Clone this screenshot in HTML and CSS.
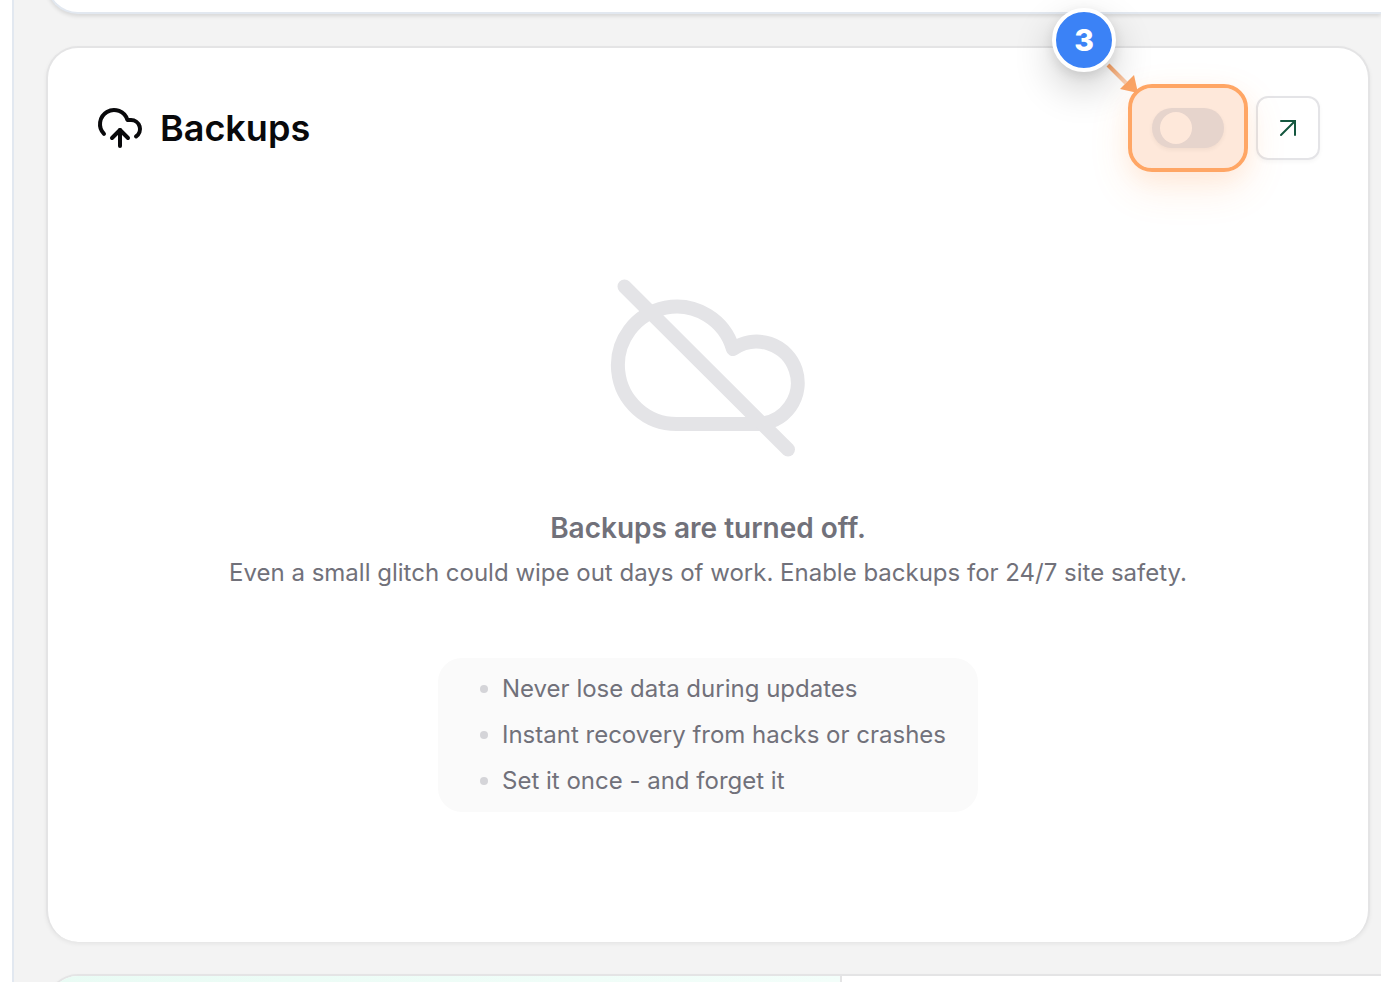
FILE: index.html
```html
<!DOCTYPE html>
<html lang="en">
<head>
<meta charset="utf-8">
<title>Backups</title>
<link rel="stylesheet" href="styles.css">
</head>
<body>
<div class="layout">
  <aside class="sidebar" aria-label="Sidebar"></aside>
  <main class="content">
    <section class="card card-previous" aria-label="Previous section"></section>

    <section class="card card-backups" aria-labelledby="backups-title">
      <header class="card-header">
        <svg class="title-icon" viewBox="0 0 24 24" aria-hidden="true">
          <path d="M12 13v8"/>
          <path d="M4 14.899A7 7 0 1 1 15.71 8h1.79a4.5 4.5 0 0 1 2.5 8.242"/>
          <path d="m8 17 4-4 4 4"/>
        </svg>
        <h2 class="title" id="backups-title">Backups</h2>
        <div class="actions">
          <div class="switch-wrap">
            <input class="switch" type="checkbox" role="switch" aria-label="Enable backups">
            <span class="highlight"></span>
            <svg class="pointer" viewBox="0 0 36 32" aria-hidden="true">
              <defs>
                <linearGradient id="fade" gradientUnits="userSpaceOnUse" x1="4" y1="4" x2="24" y2="24">
                  <stop offset="0" stop-color="#f9a264"/>
                  <stop offset="1" stop-color="#fbd5bb"/>
                </linearGradient>
              </defs>
              <path d="M4 4 22 22" stroke="url(#fade)" stroke-width="4"/>
              <path d="M16 28 30 14 34 32Z" fill="#fca566"/>
            </svg>
            <span class="step">3</span>
          </div>
          <button class="open" type="button" aria-label="Open backups">
            <svg class="open-icon" viewBox="0 0 24 24" aria-hidden="true">
              <path d="M5 19 19 5M5 5h14v14"/>
            </svg>
          </button>
        </div>
      </header>

      <div class="empty">
        <svg class="empty-icon" viewBox="0 0 200 184" aria-hidden="true">
          <path d="M69 148A58.700 58.700 0 1 1 125 73A41.200 41.200 0 1 1 149.500 148Z"/>
          <path d="M16.500 10.500 180 173.500"/>
        </svg>
        <h3 class="empty-title">Backups are turned off.</h3>
        <p class="empty-text">Even a small glitch could wipe out days of work. Enable backups for 24/7 site safety.</p>
        <ul class="benefits">
          <li>Never lose data during updates</li>
          <li>Instant recovery from hacks or crashes</li>
          <li>Set it once - and forget it</li>
        </ul>
      </div>
    </section>

    <section class="card card-next" aria-label="Next section">
      <div class="next-accent"></div>
    </section>
  </main>
</div>
</body>
</html>
```
FILE: styles.css
```css
* {
  box-sizing: border-box;
}

body {
  margin: 0;
  height: 100vh;
  overflow: hidden;
  font-family: Inter, "Liberation Sans", sans-serif;
  color: #09090b;
}

.layout {
  display: flex;
  min-height: 100vh;
}

.sidebar {
  flex: none;
  width: 14px;
  background: #fff;
  border-right: 2px solid #e2e8f0;
}

.content {
  flex: 1;
  min-width: 0;
  display: flex;
  flex-direction: column;
  gap: 32px;
  height: 100vh;
  padding-left: 32px;
  background: #f3f3f3;
  overflow: hidden;
}

.card {
  flex: none;
  background: #fff;
  border: 2px solid #e4e4e5;
  border-radius: 32px;
  box-shadow: 0 2px 4px rgba(0, 0, 0, 0.06);
}

.card-previous {
  height: 64px;
  margin-top: -50px;
  border-color: #e2e8f0;
  border-right: 0;
  border-radius: 0 0 0 32px;
  box-shadow: 0 2px 4px rgba(0, 0, 0, 0.12);
}

.card-backups {
  margin-right: 11px;
  padding: 48px 48px 130px;
  border-bottom: 0;
}

.card-header {
  display: flex;
  align-items: center;
  gap: 16px;
  height: 64px;
}

.title-icon {
  width: 48px;
  height: 48px;
  fill: none;
  stroke: currentColor;
  stroke-width: 2;
  stroke-linecap: round;
  stroke-linejoin: round;
}

.title {
  margin: 0;
  font-size: 36px;
  line-height: 48px;
  font-weight: 600;
}

.actions {
  display: flex;
  align-items: center;
  gap: 32px;
  margin-left: auto;
}

.switch-wrap {
  position: relative;
  display: flex;
}

.switch {
  appearance: none;
  display: flex;
  width: 72px;
  height: 40px;
  margin: 0;
  padding: 4px 8px;
  border-radius: 20px;
  background: #e2e6ee;
  box-shadow: 0 2px 4px rgba(0, 0, 0, 0.06);
}

.switch::before {
  content: "";
  width: 32px;
  height: 32px;
  border-radius: 50%;
  background: #fff;
}

.switch:checked {
  justify-content: flex-end;
}

.highlight {
  position: absolute;
  inset: -24px;
  border: 4px solid #ffa665;
  border-radius: 24px;
  background: rgba(251, 142, 72, 0.2);
  background-clip: padding-box;
  box-shadow: 0 16px 40px rgba(255, 140, 60, 0.14), 0 8px 20px rgba(255, 140, 60, 0.08);
  pointer-events: none;
}

.pointer {
  position: absolute;
  top: -47px;
  left: -48px;
  width: 36px;
  height: 32px;
  fill: none;
}

.step {
  position: absolute;
  top: -100px;
  left: -100px;
  display: grid;
  place-items: center;
  width: 64px;
  height: 64px;
  border: 4px solid #fff;
  border-radius: 50%;
  background: #3b82f6;
  box-shadow: 0 16px 40px rgba(0, 0, 0, 0.2), 0 4px 12px rgba(0, 0, 0, 0.1);
  color: #fff;
  font-size: 30px;
  line-height: 32px;
  font-weight: 800;
}

.open {
  display: grid;
  place-items: center;
  width: 64px;
  height: 64px;
  padding: 0;
  border: 2px solid #e4e4e7;
  border-radius: 12px;
  background: transparent;
  box-shadow: 0 2px 4px rgba(0, 0, 0, 0.04);
  color: #14573f;
}

.open-icon {
  width: 24px;
  height: 24px;
  fill: none;
  stroke: currentColor;
  stroke-width: 2;
  stroke-linecap: round;
  stroke-linejoin: miter;
}

.empty {
  display: flex;
  flex-direction: column;
  align-items: center;
  padding-top: 116px;
  color: #71717a;
}

.empty-icon {
  width: 200px;
  height: 184px;
  fill: none;
  stroke: #e4e4e7;
  stroke-width: 14;
  stroke-linecap: round;
  stroke-linejoin: round;
}

.empty-title {
  margin: 48px 0 0;
  font-size: 28px;
  line-height: 40px;
  font-weight: 600;
}

.empty-text {
  margin: 8px 0 0;
  font-size: 24px;
  line-height: 34px;
  text-align: center;
}

.benefits {
  margin: 68px 0 0;
  padding: 8px 32px 8px 42px;
  border-radius: 24px;
  background: #fafafa;
  list-style: none;
  font-size: 24px;
  line-height: 46px;
}

.benefits li {
  display: flex;
  align-items: center;
  gap: 14px;
}

.benefits li::before {
  content: "";
  width: 8px;
  height: 8px;
  border-radius: 50%;
  background: #d4d4d8;
}

.card-next {
  display: flex;
  height: 160px;
  border-right: 0;
  border-radius: 32px 0 0 0;
  overflow: hidden;
}

.next-accent {
  width: calc(60% - 6px);
  border-right: 2px solid #e4e4e5;
  background: linear-gradient(90deg, #e9fbf4, #f3fefa);
}
```
